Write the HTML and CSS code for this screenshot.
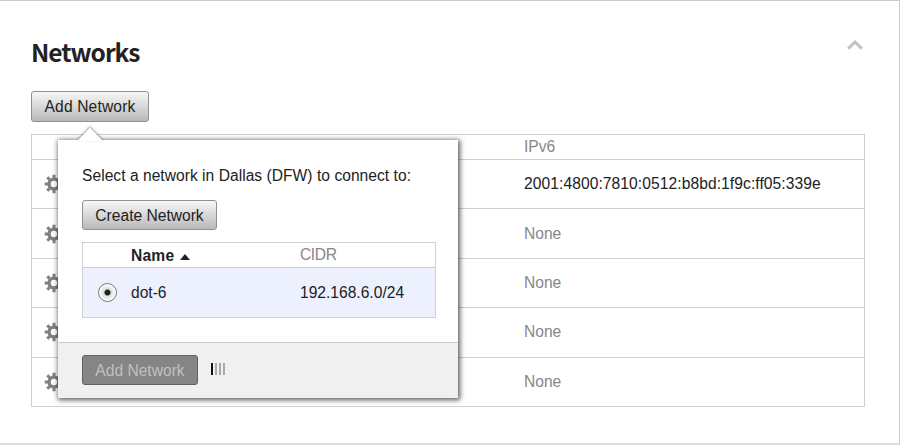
FILE: index.html
```
<!DOCTYPE html>
<html lang="en">
<head>
<meta charset="utf-8">
<title>Networks</title>
<link rel="stylesheet" href="styles.css">
</head>
<body>
<svg class="defs" width="0" height="0" aria-hidden="true">
  <symbol id="gear" viewBox="-10 -10 20 20">
    <circle r="4.9" fill="none" stroke="#808080" stroke-width="3.4"/>
    <g stroke="#808080" stroke-width="3">
      <path d="M0-6V-9.3M0 6V9.3M-6 0H-9.3M6 0H9.3M-4.4-4.4L-6.7-6.7M4.4 4.4L6.7 6.7M-4.4 4.4L-6.7 6.7M4.4-4.4L6.7-6.7"/>
    </g>
  </symbol>
</svg>
<section class="panel">
  <header class="panel-head">
    <h2>Networks</h2>
    <svg class="collapse" width="18" height="12" viewBox="0 0 18 12"><path d="M2.2 9.6L9 3L15.8 9.6" fill="none" stroke="#c2c2c2" stroke-width="3"/></svg>
  </header>
  <div class="anchor">
    <button class="btn open">Add Network</button>
    <div class="popover">
      <svg class="arrow" width="32" height="16" viewBox="0 0 32 16"><path d="M3 16L16 2.5L29 16Z" fill="#fff"/></svg>
      <div class="popover-body">
        <p>Select a network in Dallas (DFW) to connect to:</p>
        <button class="btn create">Create Network</button>
        <div class="picker">
          <div class="picker-row picker-head"><span></span><span class="sorted"><b>Name</b><i></i></span><span class="muted cidr-head">CIDR</span></div>
          <div class="picker-row selected"><span class="radio"></span><span>dot-6</span><span class="cidr">192.168.6.0/24</span></div>
        </div>
      </div>
      <footer>
        <button class="btn disabled" disabled>Add Network</button>
        <span class="loader"><i></i><i></i><i></i><i></i></span>
      </footer>
    </div>
  </div>
  <div class="networks">
    <div class="row head"><span></span><span class="muted">IPv6</span></div>
    <div class="row"><svg class="gear"><use href="#gear"/></svg><span class="address">2001:4800:7810:0512:b8bd:1f9c:ff05:339e</span></div>
    <div class="row"><svg class="gear"><use href="#gear"/></svg><span class="muted">None</span></div>
    <div class="row"><svg class="gear"><use href="#gear"/></svg><span class="muted">None</span></div>
    <div class="row"><svg class="gear"><use href="#gear"/></svg><span class="muted">None</span></div>
    <div class="row"><svg class="gear"><use href="#gear"/></svg><span class="muted">None</span></div>
  </div>
</section>
</body>
</html>
```
FILE: styles.css
```
* { box-sizing: border-box; }
html { overflow: hidden; }
body {
  margin: 0;
  height: 447px;
  background: #fff;
  color: #222;
  font: 15.6px/20px "Liberation Sans", sans-serif;
}
.defs { position: absolute; }
.panel {
  width: 900px;
  height: 445px;
  padding: 0 34px 0 31px;
  border-top: 1px solid #ccc;
  border-right: 1px solid #ccc;
  border-bottom: 2px solid #ddd;
}
.panel-head {
  display: flex;
  justify-content: space-between;
  height: 90px;
  padding-top: 33px;
}
h2 {
  margin: 0;
  font: bold 24.5px/36px "Noto Sans CJK SC", sans-serif;
  letter-spacing: -1px;
}
.collapse { margin: 5px 1px 0 0; }
.anchor { position: relative; height: 43px; }
.btn {
  display: block;
  height: 31px;
  padding: 0;
  border: 1px solid #909090;
  border-radius: 3px;
  background: linear-gradient(#f7f7f7, #b9b9b9);
  color: #222;
  font: inherit;
  line-height: 27px;
  text-align: center;
}
.open { width: 118px; letter-spacing: .15px; }
.popover {
  position: absolute;
  z-index: 2;
  left: 27px;
  top: 49px;
  width: 400px;
  height: 258px;
  background: #fff;
  box-shadow: 1px 1px 5px 1px rgba(0, 0, 0, .65);
}
.arrow {
  position: absolute;
  left: 16px;
  top: -15px;
  filter: drop-shadow(0 -1px 1px rgba(0, 0, 0, .45));
}
.popover-body { height: 202px; padding: 26px 22px 0 24px; }
.popover p { margin: 0 0 14px; white-space: nowrap; letter-spacing: .03px; }
.create { width: 135px; height: 30px; }
.picker { margin-top: 12px; border: 1px solid #d0d0d0; }
.picker-row {
  display: grid;
  grid-template-columns: 48px 169px 1fr;
  align-items: center;
  height: 49px;
}
.picker-head { height: 25px; border-bottom: 1px solid #d0d0d0; }
.sorted { display: flex; align-items: center; gap: 6px; padding-top: 2px; letter-spacing: .2px; }
.sorted i {
  margin-top: 2px;
  border: 5px solid transparent;
  border-top: 0;
  border-bottom: 6px solid #222;
}
.selected { background: #edf1fe; }
.radio {
  width: 19px;
  height: 19px;
  margin-left: 15px;
  border: 1px solid #777;
  border-radius: 50%;
  background: radial-gradient(circle, #222 2.4px, #ddd 3.6px, #e7e7e7 5px, #fff 8px);
}
.muted { color: #878787; }
.cidr-head { letter-spacing: -.4px; }
.popover footer {
  display: flex;
  align-items: flex-start;
  gap: 13px;
  height: 56px;
  padding: 12px 24px;
  border-top: 1px solid #ccc;
  background: #f0f0f0;
}
.disabled {
  width: 116px;
  height: 30px;
  border-color: #616161;
  background: #858585;
  color: #c0c0c0;
}
.loader { display: flex; gap: 2px; margin-top: 8px; }
.loader i { width: 2px; height: 12px; background: #aaa; }
.loader i:first-child { background: #111; }
.networks { border: 1px solid #d0d0d0; }
.row {
  display: grid;
  grid-template-columns: 492px 1fr;
  align-items: center;
  height: 49.4px;
  border-bottom: 1px solid #d0d0d0;
}
.row.head { height: 25px; }
.row:last-child { height: 48.4px; border-bottom: 0; }
.gear { width: 20px; height: 20px; margin-left: 12px; }
.address { letter-spacing: .08px; }
```
